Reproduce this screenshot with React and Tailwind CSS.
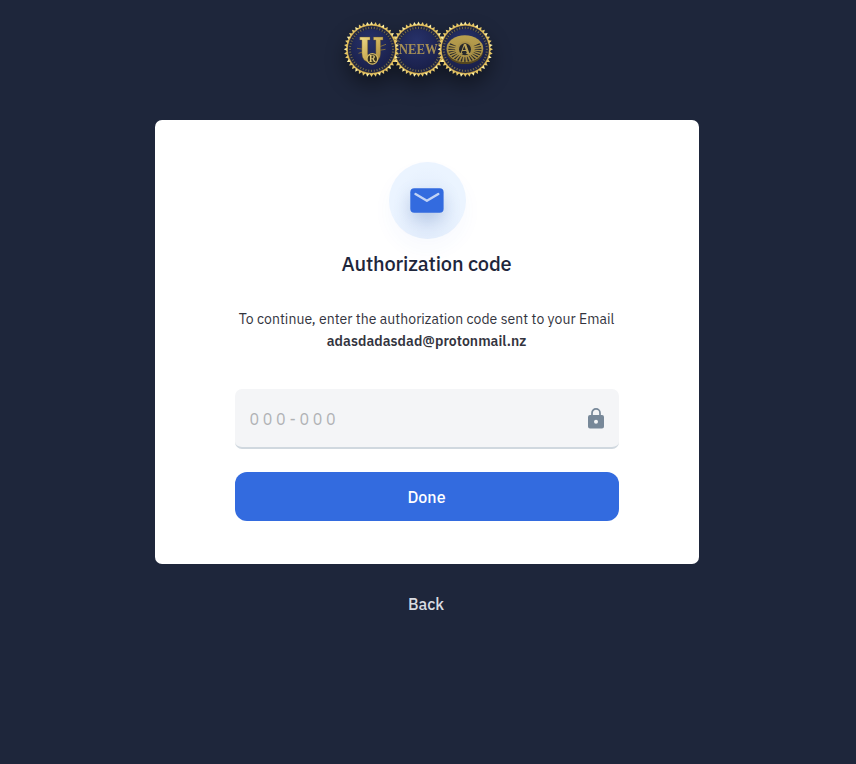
import React from "react";

const TICKS = Array.from({ length: 48 }, (_, i) => i * 7.5);
const TEETH = Array.from({ length: 40 }, (_, i) => i * 9);
const RAYS = Array.from({ length: 28 }, (_, i) => (i * 360) / 28);

function Seal({ cx, children }) {
  return (
    <g transform={`translate(${cx} 28.3)`}>
      <circle r="25.2" fill="#a98535" />
      {TEETH.map((a) => (
        <path
          key={a}
          d="M-1.8 -24.4 L0 -27.7 L1.8 -24.4 Z"
          fill={a % 27 === 0 ? "#fff0a0" : "#e8c968"}
          transform={`rotate(${a})`}
        />
      ))}
      <circle r="24.5" fill="none" stroke="#dfc066" strokeWidth="0.9" />
      <circle r="23.6" fill="#1d2446" />
      {TICKS.map((a) => (
        <path
          key={a}
          d="M0 -20.4 V-22.6"
          stroke="#756a48"
          strokeWidth="1"
          transform={`rotate(${a})`}
        />
      ))}
      <circle r="20.2" fill="url(#enamel)" />
      {children}
    </g>
  );
}

function Logo() {
  return (
    <svg
      className="block h-14 w-[150px] overflow-visible drop-shadow-[0_10px_10px_rgba(0,0,0,0.4)]"
      viewBox="0 0 150 56"
      fontFamily="'Liberation Serif', serif"
      textAnchor="middle"
    >
      <defs>
        <radialGradient id="enamel" cx="0.45" cy="0.3" r="0.75">
          <stop offset="0" stopColor="#27326a" />
          <stop offset="1" stopColor="#191f49" />
        </radialGradient>
        <linearGradient id="gold" x1="0" y1="0" x2="1" y2="1">
          <stop offset="0" stopColor="#f0dc8a" />
          <stop offset="0.5" stopColor="#cdb05a" />
          <stop offset="1" stopColor="#a5853a" />
        </linearGradient>
        <linearGradient id="disc" x1="0" y1="0" x2="0" y2="1">
          <stop offset="0" stopColor="#b9a04f" />
          <stop offset="1" stopColor="#a18840" />
        </linearGradient>
      </defs>
      <Seal cx={74.5}>
        <text
          x="-0.2"
          y="5"
          fontSize="15"
          fontWeight="700"
          fill="#a48e55"
          textLength="39"
          lengthAdjust="spacingAndGlyphs"
        >
          NEEW
        </text>
      </Seal>
      <Seal cx={27.5}>
        <path d="M-14.5 -1 L-8 0 M-13 4 L-8 2.5 M8 -2.5 L14.5 -5 M8 1 L14 0" stroke="#8a743c" strokeWidth="0.9" />
        <path
          d="M-11.7 -12.2 H-1.5 V-9.2 H-3.8 V4.5 Q-3.8 8 -0.3 8 Q4.4 8 4.4 3.5 V-9.2 H2 V-12.2 H11.5 V-9.2 H9 V4 Q9 13 -0.5 13 Q-9.6 13 -9.6 4 V-9.2 H-11.7 Z"
          fill="url(#gold)"
          stroke="#6f5925"
          strokeWidth="0.4"
        />
        <circle cx="0.8" cy="9.6" r="5.3" fill="#34301f" stroke="#d8bd65" strokeWidth="1.2" />
        <text x="0.8" y="12.8" fontSize="9.5" fontWeight="700" fill="#dfc676">R</text>
      </Seal>
      <Seal cx={121.3}>
        <ellipse cx="-0.4" cy="2.2" rx="18.2" ry="12.6" fill="#54461f" />
        <ellipse cx="-0.4" cy="-0.6" rx="18.4" ry="13.4" fill="url(#disc)" />
        {RAYS.map((a) =>
          a > 55 && a < 305 ? (
            <path
              key={a}
              d="M-0.2 -8 L-0.7 -13.6 H0.7 L0.2 -8 Z"
              fill="#26272c"
              transform={`translate(-0.4 0) scale(1.22 0.92) rotate(${a})`}
            />
          ) : null
        )}
        <circle cx="-0.3" cy="0" r="7.8" fill="#a99148" />
        <circle cx="-0.3" cy="0" r="6" fill="#26282b" />
        <text x="-0.3" y="4.8" fontSize="14.5" fontWeight="700" fill="#bda456">A</text>
      </Seal>
    </svg>
  );
}

function MailIcon() {
  return (
    <svg
      className="block h-[25px] w-[34px] overflow-visible drop-shadow-[0_7px_8px_rgba(51,90,160,0.22)]"
      viewBox="0 0 34 25"
      fill="none"
    >
      <rect x="0.3" y="0.2" width="33.3" height="24.5" rx="4" fill="#336bdf" />
      <path d="M5.5 6 L16.9 12.8 L28.3 6" stroke="#c2d3f5" strokeWidth="2.4" strokeLinecap="round" strokeLinejoin="round" />
    </svg>
  );
}

function LockIcon() {
  return (
    <svg className="block h-[21px] w-4" viewBox="0 0 16 21" fill="none">
      <path d="M4 8 V4.9 A4 4 0 0 1 12 4.9 V8" stroke="#778899" strokeWidth="1.7" />
      <path
        fillRule="evenodd"
        d="M2 7 H14 Q16 7 16 9 V18.5 Q16 20.5 14 20.5 H2 Q0 20.5 0 18.5 V9 Q0 7 2 7 Z M8 11.8 A2 2 0 1 0 8 15.8 A2 2 0 1 0 8 11.8 Z"
        fill="#778899"
      />
    </svg>
  );
}

export default function App() {
  return (
    <div className="flex h-[764px] w-[856px] flex-col items-center bg-[#1e263b] pt-[21px] pr-[2px] font-['IBM_Plex_Sans',Roboto,sans-serif]">
      <header className="mr-[17px]">
        <Logo />
      </header>

      <main className="mt-[43px] flex h-[444px] w-[544px] flex-col items-center rounded-[7px] bg-white pt-[42px]">
        <div className="flex size-[77px] items-center justify-center rounded-full bg-[#ebf4ff] bg-radial-[at_50%_75%] from-[#dee9fa] to-[#ebf4ff] to-65% shadow-[0_10px_20px_rgba(51,107,223,0.04)]">
          <MailIcon />
        </div>
        <h1 className="mt-[11px] mr-px text-xl leading-7 font-medium tracking-[-0.16px] whitespace-nowrap text-[#1e263b]">
          Authorization code
        </h1>
        <div className="mt-[30px] mr-px text-center text-sm leading-[22px] whitespace-nowrap text-[#33343e]">
          <p className="tracking-[0.035px]">To continue, enter the authorization code sent to your Email</p>
          <p className="font-semibold tracking-[0.04px]">adasdadasdad@protonmail.nz</p>
        </div>

        <label className="mt-[37px] mr-px flex h-[60px] w-[384px] shrink-0 items-center justify-between rounded-[7px] border-b-2 border-[#d0d8df] bg-[#f4f5f7] pt-px pr-[15px] pl-[15px]">
          <input
            className="w-40 bg-transparent text-base tracking-[3.7px] outline-none placeholder:text-[#b0b2b5]"
            placeholder="000-000"
          />
          <LockIcon />
        </label>
        <button className="mt-[23px] mr-px h-[49px] w-[384px] shrink-0 rounded-xl bg-[#336bdf] text-base font-medium text-white">
          Done
        </button>
      </main>

      <button className="mt-7 mr-[2px] text-base leading-6 font-medium text-[#d9dce2]">Back</button>
    </div>
  );
}
